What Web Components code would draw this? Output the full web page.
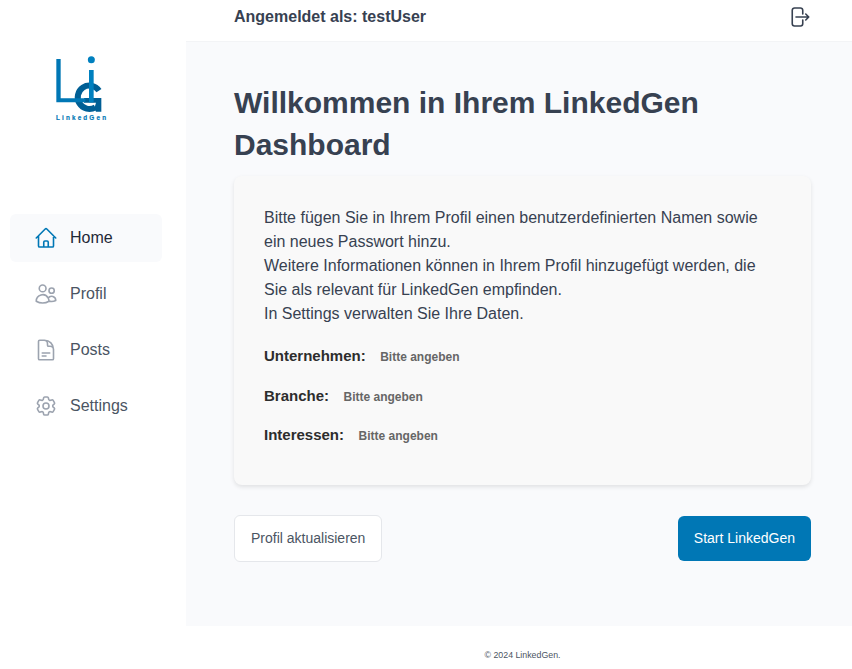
<!DOCTYPE html>
<html lang="de">
<head>
<meta charset="utf-8">
<title>LinkedGen</title>
<style>
html,body{margin:0;height:100%;background:#fff;overflow:hidden}
body{font-family:"Liberation Sans",Arial,sans-serif;color:#374151}
</style>
</head>
<body>
<lg-app></lg-app>
<script>
const ICONS = {
  home: 'M2.25 12l8.954-8.955c.44-.439 1.152-.439 1.591 0L21.75 12M4.5 9.75v10.125c0 .621.504 1.125 1.125 1.125H9.75v-4.875c0-.621.504-1.125 1.125-1.125h2.25c.621 0 1.125.504 1.125 1.125V21h4.125c.621 0 1.125-.504 1.125-1.125V9.75M8.25 21h8.25',
  users: 'M15 19.128a9.38 9.38 0 002.625.372 9.337 9.337 0 004.121-.952 4.125 4.125 0 00-7.533-2.493M15 19.128v-.003c0-1.113-.285-2.16-.786-3.07M15 19.128v.106A12.318 12.318 0 018.624 21c-2.331 0-4.512-.645-6.374-1.766l-.001-.109a6.375 6.375 0 0111.964-3.07M12 6.375a3.375 3.375 0 11-6.75 0 3.375 3.375 0 016.75 0zm8.25 2.25a2.625 2.625 0 11-5.25 0 2.625 2.625 0 015.25 0z',
  doc: 'M19.5 14.25v-2.625a3.375 3.375 0 00-3.375-3.375h-1.5A1.125 1.125 0 0113.5 7.125v-1.5a3.375 3.375 0 00-3.375-3.375H8.25m0 12.75h7.5m-7.5 3H12M10.5 2.25H5.625c-.621 0-1.125.504-1.125 1.125v17.25c0 .621.504 1.125 1.125 1.125h12.75c.621 0 1.125-.504 1.125-1.125V11.25a9 9 0 00-9-9z',
  cog: 'M9.594 3.94c.09-.542.56-.94 1.11-.94h2.593c.55 0 1.02.398 1.11.94l.213 1.281c.063.374.313.686.645.87.074.04.147.083.22.127.324.196.72.257 1.075.124l1.217-.456a1.125 1.125 0 011.37.49l1.296 2.247a1.125 1.125 0 01-.26 1.431l-1.003.827c-.293.24-.438.613-.431.992a6.759 6.759 0 010 .255c-.007.378.138.75.43.99l1.005.828c.424.35.534.954.26 1.43l-1.298 2.247a1.125 1.125 0 01-1.369.491l-1.217-.456c-.355-.133-.75-.072-1.076.124a6.57 6.57 0 01-.22.128c-.331.183-.581.495-.644.869l-.213 1.28c-.09.543-.56.941-1.11.941h-2.594c-.55 0-1.02-.398-1.11-.94l-.213-1.281c-.062-.374-.312-.686-.644-.87a6.52 6.52 0 01-.22-.127c-.325-.196-.72-.257-1.076-.124l-1.217.456a1.125 1.125 0 01-1.369-.49l-1.297-2.247a1.125 1.125 0 01.26-1.431l1.004-.827c.292-.24.437-.613.43-.992a6.932 6.932 0 010-.255c.007-.378-.138-.75-.43-.99l-1.004-.828a1.125 1.125 0 01-.26-1.43l1.297-2.247a1.125 1.125 0 011.37-.491l1.216.456c.356.133.751.072 1.076-.124.072-.044.146-.087.22-.128.332-.183.582-.495.644-.869l.214-1.281zM15 12a3 3 0 11-6 0 3 3 0 016 0z',
  logout: 'M15.75 9V5.25A2.25 2.25 0 0013.5 3h-6a2.25 2.25 0 00-2.25 2.25v13.5A2.25 2.25 0 007.5 21h6a2.25 2.25 0 002.25-2.25V15m3 0l3-3m0 0l-3-3m3 3H9'
};
function define(name, render) {
  customElements.define(name, class extends HTMLElement {
    constructor() { super(); this.attachShadow({mode: 'open'}); }
    connectedCallback() { this.shadowRoot.innerHTML = render(this); }
  });
}
define('lg-icon', el => `<style>:host{display:block;width:24px;height:24px;flex:none}svg{display:block}</style>
<svg width="24" height="24" viewBox="0 0 24 24" fill="none" stroke="currentColor" stroke-width="1.6" stroke-linecap="round" stroke-linejoin="round"><path d="${ICONS[el.getAttribute('name')]}"/></svg>`);

define('lg-logo', () => `<style>:host{display:block;width:90px;height:90px}svg{display:block}text{font:bold 19px "Liberation Sans",sans-serif}</style>
<svg width="90" height="90" viewBox="0 0 270 270">
<path d="M177 137A35 35 0 1 0 166 187" fill="none" stroke="#005f95" stroke-width="18"/>
<path d="M132 159H184V200H168L163 190L168 173H132Z" fill="#005f95"/>
<path d="M49 42H62V160H136V172H49Z" fill="#0077b5"/>
<path d="M147 75H161V172H147Z" fill="#0080bf"/>
<circle cx="154" cy="44.500" r="10.500" fill="#0080bf"/>
<text x="48" y="224" textLength="150" fill="#0077b5" stroke="#0077b5" stroke-width=".5">LinkedGen</text>
</svg>`);

define('lg-nav-item', el => `<style>
:host{display:flex;align-items:center;box-sizing:border-box;height:48px;padding:0 24px;gap:12px;border-radius:6px;font-size:16px;line-height:24px;color:#4b5563}
:host([active]){background:#f9fafc;color:#1f2937}
lg-icon{color:#9ca3af}:host([active]) lg-icon{color:#0077b5}
</style><lg-icon name="${el.getAttribute('icon')}"></lg-icon><span><slot></slot></span>`);

define('lg-sidebar', () => `<style>
:host{display:block;box-sizing:border-box;width:186px;padding:45px 24px 0 10px;background:#fff}
lg-logo{margin-left:30px}
nav{display:flex;flex-direction:column;gap:8px;margin-top:79px}
</style><lg-logo></lg-logo><nav>
<lg-nav-item icon="home" active>Home</lg-nav-item>
<lg-nav-item icon="users">Profil</lg-nav-item>
<lg-nav-item icon="doc">Posts</lg-nav-item>
<lg-nav-item icon="cog">Settings</lg-nav-item></nav>`);

define('lg-header', () => `<style>
:host{display:flex;justify-content:space-between;box-sizing:border-box;height:42px;padding:5px 41px 0 48px;background:#fff;border-bottom:1px solid #f3f4f6;color:#374151}
b{font-size:16px;line-height:24px}
</style><b><slot></slot></b><lg-icon name="logout"></lg-icon>`);

define('lg-field', el => `<style>
:host{display:flex;align-items:baseline;gap:14.500px;height:24px;line-height:24px}
b{font-size:15px;color:#2d2d2d}span{font-size:12px;font-weight:bold;color:#666}
</style><b>${el.getAttribute('label')}</b><span><slot></slot></span>`);

define('lg-card', () => `<style>
:host{display:block;box-sizing:border-box;height:309px;padding:30px;border-radius:8px;background:#f9f9f9;box-shadow:0 2px 4px rgba(0,0,0,.1);font-size:16px;line-height:24px;color:#374151}
</style><slot></slot>`);

define('lg-button', () => `<style>
:host{display:block;box-sizing:border-box;height:47px;padding:0 16px;border:1px solid #e5e7eb;border-radius:6px;background:#fff;color:#4b5563;font-size:14px;line-height:45px;white-space:nowrap}
:host([primary]){height:45px;border:0;background:#0077b5;color:#fff}
</style><slot></slot>`);

define('lg-dashboard', () => `<style>
:host{display:block;box-sizing:border-box;height:584px;padding:40px 41px 0 48px;background:#f9fafc}
h1{margin:0 0 10px;font-size:30px;line-height:42px;color:#374151}
p{margin:0}
.fields{display:flex;flex-direction:column;gap:15.500px;margin-top:18px}
.actions{display:flex;justify-content:space-between;align-items:center;margin-top:30px}
</style><h1>Willkommen in Ihrem LinkedGen Dashboard</h1>
<lg-card><p>Bitte fügen Sie in Ihrem Profil einen benutzerdefinierten Namen sowie<br>ein neues Passwort hinzu.<br>Weitere Informationen können in Ihrem Profil hinzugefügt werden, die<br>Sie als relevant für LinkedGen empfinden.<br>In Settings verwalten Sie Ihre Daten.</p>
<div class="fields"><lg-field label="Unternehmen:">Bitte angeben</lg-field><lg-field label="Branche:">Bitte angeben</lg-field><lg-field label="Interessen:">Bitte angeben</lg-field></div></lg-card>
<div class="actions"><lg-button>Profil aktualisieren</lg-button><lg-button primary>Start LinkedGen</lg-button></div>`);

define('lg-footer', () => `<style>
:host{display:block;padding-top:22px;padding-left:7px;text-align:center;font-size:8.800px;line-height:14px;color:#4b5563}
</style><slot></slot>`);

define('lg-app', () => `<style>
:host{display:grid;grid-template-columns:186px 1fr;height:669px;overflow:hidden}
</style><lg-sidebar></lg-sidebar><main><lg-header>Angemeldet als: testUser</lg-header><lg-dashboard></lg-dashboard><lg-footer>© 2024 LinkedGen.</lg-footer></main>`);
</script>
</body>
</html>
